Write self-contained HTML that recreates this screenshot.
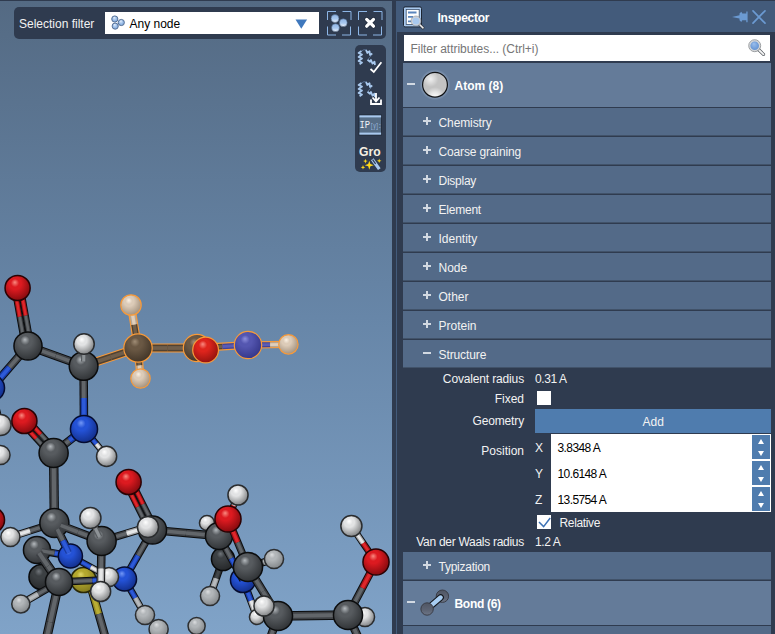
<!DOCTYPE html>
<html><head><meta charset="utf-8"><title>Inspector</title>
<style>
*{box-sizing:border-box;margin:0;padding:0}
html,body{width:775px;height:634px;overflow:hidden;background:#2f3b4f}
body{position:relative;font-family:"Liberation Sans",sans-serif;font-size:12px;color:#f2f2f2}
.abs{position:absolute}
#vp{left:0;top:1px;width:392px;height:633px;background:linear-gradient(#546a83 0%,#6786a8 50%,#80a3c8 100%);overflow:hidden}
#tb{left:14px;top:7px;width:372px;height:32px;background:#2f3b4f;border-radius:5px}
#stb{left:355px;top:45px;width:31px;height:127px;background:#2f3b4f;border-radius:5px}
.t{position:absolute;white-space:pre;line-height:14px;height:14px}
.b{font-weight:bold}
#hdr{left:396px;top:1px;width:379px;height:31px;background:#435b7b}
#hcol{left:396px;top:32px;width:1px;height:602px;background:#435b7b}
.row{position:absolute;left:403px;width:368px;background:#536a88;height:27px;box-shadow:0 1px 0 #415269}
.grow{position:absolute;left:403px;width:368px;background:#647b99;height:44px}
.pm{position:absolute;background:#d2d9e2}
.lbl{position:absolute;white-space:pre;line-height:14px;height:14px;text-align:right;right:251px}
.val{position:absolute;white-space:pre;line-height:14px;height:14px;left:535px}
.spin{position:absolute;left:752px;width:18px;height:24px;background:#4f7cae}
.spin:before{content:"";position:absolute;left:5.5px;top:3.5px;border:3.5px solid transparent;border-top:0;border-bottom:5.5px solid #fff}
.spin:after{content:"";position:absolute;left:5.5px;top:15.5px;border:3.5px solid transparent;border-bottom:0;border-top:5.5px solid #fff}
</style></head><body>
<div id="vp" class="abs">
<svg class="abs" style="left:0;top:-1px" width="392" height="634" viewBox="0 0 392 634" stroke-linecap="butt">
<defs><radialGradient id="gC" cx="0.42" cy="0.40" r="0.68" fx="0.39" fy="0.27"><stop offset="0" stop-color="#b4b9bd"/><stop offset="0.24" stop-color="#575b5f"/><stop offset="0.36" stop-color="#575b5f"/><stop offset="1" stop-color="#2a2d30"/></radialGradient><radialGradient id="gO" cx="0.42" cy="0.40" r="0.68" fx="0.39" fy="0.27"><stop offset="0" stop-color="#fa8a80"/><stop offset="0.24" stop-color="#dc1a20"/><stop offset="0.36" stop-color="#dc1a20"/><stop offset="1" stop-color="#78080c"/></radialGradient><radialGradient id="gN" cx="0.42" cy="0.40" r="0.68" fx="0.39" fy="0.27"><stop offset="0" stop-color="#7398f6"/><stop offset="0.24" stop-color="#2452d6"/><stop offset="0.36" stop-color="#2452d6"/><stop offset="1" stop-color="#102a80"/></radialGradient><radialGradient id="gH" cx="0.42" cy="0.40" r="0.68" fx="0.39" fy="0.27"><stop offset="0" stop-color="#ffffff"/><stop offset="0.24" stop-color="#e2e3e4"/><stop offset="0.36" stop-color="#e2e3e4"/><stop offset="1" stop-color="#727476"/></radialGradient><radialGradient id="gHg" cx="0.42" cy="0.40" r="0.68" fx="0.39" fy="0.27"><stop offset="0" stop-color="#dcdee0"/><stop offset="0.24" stop-color="#b2b6b9"/><stop offset="0.36" stop-color="#b2b6b9"/><stop offset="1" stop-color="#7c8083"/></radialGradient><radialGradient id="gS" cx="0.42" cy="0.40" r="0.68" fx="0.39" fy="0.27"><stop offset="0" stop-color="#e0d668"/><stop offset="0.24" stop-color="#b4a82e"/><stop offset="0.36" stop-color="#b4a82e"/><stop offset="1" stop-color="#7a721c"/></radialGradient><radialGradient id="gCs" cx="0.42" cy="0.40" r="0.68" fx="0.39" fy="0.27"><stop offset="0" stop-color="#a08d76"/><stop offset="0.24" stop-color="#6a5844"/><stop offset="0.36" stop-color="#6a5844"/><stop offset="1" stop-color="#3c3024"/></radialGradient><radialGradient id="gHs" cx="0.42" cy="0.40" r="0.68" fx="0.39" fy="0.27"><stop offset="0" stop-color="#fbf1e4"/><stop offset="0.24" stop-color="#dccbb8"/><stop offset="0.36" stop-color="#dccbb8"/><stop offset="1" stop-color="#9c8a76"/></radialGradient><radialGradient id="gNs" cx="0.42" cy="0.40" r="0.68" fx="0.39" fy="0.27"><stop offset="0" stop-color="#8e90de"/><stop offset="0.24" stop-color="#5456b0"/><stop offset="0.36" stop-color="#5456b0"/><stop offset="1" stop-color="#303284"/></radialGradient><radialGradient id="gOs" cx="0.42" cy="0.40" r="0.68" fx="0.39" fy="0.27"><stop offset="0" stop-color="#fa8a80"/><stop offset="0.24" stop-color="#de241c"/><stop offset="0.36" stop-color="#de241c"/><stop offset="1" stop-color="#88100c"/></radialGradient><radialGradient id="gCd" cx="0.42" cy="0.40" r="0.68" fx="0.39" fy="0.27"><stop offset="0" stop-color="#70757a"/><stop offset="0.24" stop-color="#3c4043"/><stop offset="0.36" stop-color="#3c4043"/><stop offset="1" stop-color="#222426"/></radialGradient></defs>
<line x1="89.0" y1="580.0" x2="109.0" y2="650.0" stroke="#0c0d0e" stroke-width="8.5"/><line x1="89.0" y1="580.0" x2="98.7" y2="614.0" stroke="#948a24" stroke-width="6.5"/><line x1="89.0" y1="580.0" x2="98.7" y2="614.0" stroke="#b9ad34" stroke-width="3.6"/><line x1="98.7" y1="614.0" x2="109.0" y2="650.0" stroke="#3e4145" stroke-width="6.5"/><line x1="98.7" y1="614.0" x2="109.0" y2="650.0" stroke="#62666a" stroke-width="3.6"/><line x1="223.0" y1="559.0" x2="210.0" y2="596.0" stroke="#0c0d0e" stroke-width="7.6"/><line x1="223.0" y1="559.0" x2="216.2" y2="578.4" stroke="#2d3033" stroke-width="5.6"/><line x1="223.0" y1="559.0" x2="216.2" y2="578.4" stroke="#424649" stroke-width="3.1"/><line x1="216.2" y1="578.4" x2="210.0" y2="596.0" stroke="#94989b" stroke-width="5.6"/><line x1="216.2" y1="578.4" x2="210.0" y2="596.0" stroke="#b7babd" stroke-width="3.1"/><line x1="219.0" y1="536.0" x2="223.0" y2="559.0" stroke="#0c0d0e" stroke-width="8.5"/><line x1="219.0" y1="536.0" x2="221.2" y2="548.5" stroke="#3e4145" stroke-width="6.5"/><line x1="219.0" y1="536.0" x2="221.2" y2="548.5" stroke="#62666a" stroke-width="3.6"/><line x1="221.2" y1="548.5" x2="223.0" y2="559.0" stroke="#2d3033" stroke-width="6.5"/><line x1="221.2" y1="548.5" x2="223.0" y2="559.0" stroke="#424649" stroke-width="3.6"/><circle cx="41.5" cy="577" r="12.55" fill="url(#gCd)" stroke="#08090a" stroke-width="1.5"/><circle cx="83.5" cy="580" r="12.55" fill="url(#gS)" stroke="#2a2806" stroke-width="1.5"/><circle cx="158.6" cy="629" r="9.55" fill="url(#gHg)" stroke="#2c2e30" stroke-width="1.5"/><circle cx="196.6" cy="626" r="8.55" fill="url(#gHg)" stroke="#2c2e30" stroke-width="1.5"/><circle cx="207" cy="523" r="7.55" fill="url(#gH)" stroke="#2a2c2e" stroke-width="1.5"/><circle cx="223" cy="559" r="11.55" fill="url(#gCd)" stroke="#08090a" stroke-width="1.5"/><circle cx="210" cy="596" r="9.55" fill="url(#gHg)" stroke="#2c2e30" stroke-width="1.5"/><line x1="59.0" y1="582.0" x2="44.0" y2="650.0" stroke="#0c0d0e" stroke-width="9.4"/><line x1="59.0" y1="582.0" x2="50.1" y2="622.3" stroke="#3e4145" stroke-width="7.4"/><line x1="59.0" y1="582.0" x2="50.1" y2="622.3" stroke="#62666a" stroke-width="4.1"/><line x1="50.1" y1="622.3" x2="44.0" y2="650.0" stroke="#3e4145" stroke-width="7.4"/><line x1="50.1" y1="622.3" x2="44.0" y2="650.0" stroke="#62666a" stroke-width="4.1"/><line x1="243.0" y1="580.0" x2="257.0" y2="617.0" stroke="#0c0d0e" stroke-width="7.6"/><line x1="243.0" y1="580.0" x2="250.9" y2="600.8" stroke="#193ca6" stroke-width="5.6"/><line x1="243.0" y1="580.0" x2="250.9" y2="600.8" stroke="#2d5ad9" stroke-width="3.1"/><line x1="250.9" y1="600.8" x2="257.0" y2="617.0" stroke="#a4a5a7" stroke-width="5.6"/><line x1="250.9" y1="600.8" x2="257.0" y2="617.0" stroke="#e5e6e7" stroke-width="3.1"/><line x1="138.0" y1="348.0" x2="197.0" y2="348.0" stroke="#f79a3a" stroke-width="9.2"/><line x1="138.0" y1="348.0" x2="167.8" y2="348.0" stroke="#504232" stroke-width="7.0"/><line x1="138.0" y1="348.0" x2="167.8" y2="348.0" stroke="#705e4a" stroke-width="3.8"/><line x1="167.8" y1="348.0" x2="197.0" y2="348.0" stroke="#504232" stroke-width="7.0"/><line x1="167.8" y1="348.0" x2="197.0" y2="348.0" stroke="#705e4a" stroke-width="3.8"/><line x1="197.0" y1="348.0" x2="248.0" y2="345.0" stroke="#f79a3a" stroke-width="7.8"/><line x1="197.0" y1="348.0" x2="222.5" y2="346.5" stroke="#504232" stroke-width="5.6"/><line x1="197.0" y1="348.0" x2="222.5" y2="346.5" stroke="#705e4a" stroke-width="3.1"/><line x1="222.5" y1="346.5" x2="248.0" y2="345.0" stroke="#404297" stroke-width="5.6"/><line x1="222.5" y1="346.5" x2="248.0" y2="345.0" stroke="#5a5cb5" stroke-width="3.1"/><line x1="59.0" y1="582.0" x2="20.8" y2="604.0" stroke="#0c0d0e" stroke-width="7.6"/><line x1="59.0" y1="582.0" x2="38.0" y2="594.1" stroke="#3e4145" stroke-width="5.6"/><line x1="59.0" y1="582.0" x2="38.0" y2="594.1" stroke="#62666a" stroke-width="3.1"/><line x1="38.0" y1="594.1" x2="20.8" y2="604.0" stroke="#94989b" stroke-width="5.6"/><line x1="38.0" y1="594.1" x2="20.8" y2="604.0" stroke="#b7babd" stroke-width="3.1"/><line x1="124.5" y1="579.0" x2="145.0" y2="615.0" stroke="#0c0d0e" stroke-width="7.1"/><line x1="124.5" y1="579.0" x2="135.4" y2="598.1" stroke="#193ca6" stroke-width="5.1"/><line x1="124.5" y1="579.0" x2="135.4" y2="598.1" stroke="#2d5ad9" stroke-width="2.8"/><line x1="135.4" y1="598.1" x2="145.0" y2="615.0" stroke="#94989b" stroke-width="5.1"/><line x1="135.4" y1="598.1" x2="145.0" y2="615.0" stroke="#b7babd" stroke-width="2.8"/><circle cx="197" cy="348" r="13.70" fill="url(#gCs)" stroke="#f79a3a" stroke-width="1.2"/><circle cx="20.8" cy="604" r="9.05" fill="url(#gHg)" stroke="#2c2e30" stroke-width="1.5"/><circle cx="145" cy="615" r="9.55" fill="url(#gHg)" stroke="#2c2e30" stroke-width="1.5"/><circle cx="243" cy="580" r="12.55" fill="url(#gN)" stroke="#050c30" stroke-width="1.5"/><circle cx="257" cy="617" r="7.55" fill="url(#gH)" stroke="#2a2c2e" stroke-width="1.5"/><circle cx="365" cy="617" r="9.55" fill="url(#gH)" stroke="#2a2c2e" stroke-width="1.5"/><line x1="219.0" y1="536.0" x2="243.0" y2="580.0" stroke="#0c0d0e" stroke-width="7.6"/><line x1="219.0" y1="536.0" x2="231.2" y2="558.4" stroke="#3e4145" stroke-width="5.6"/><line x1="219.0" y1="536.0" x2="231.2" y2="558.4" stroke="#62666a" stroke-width="3.1"/><line x1="231.2" y1="558.4" x2="243.0" y2="580.0" stroke="#193ca6" stroke-width="5.6"/><line x1="231.2" y1="558.4" x2="243.0" y2="580.0" stroke="#2d5ad9" stroke-width="3.1"/><line x1="20.6" y1="287.5" x2="31.0" y2="345.5" stroke="#0c0d0e" stroke-width="6.5"/><line x1="14.6" y1="288.5" x2="25.0" y2="346.5" stroke="#0c0d0e" stroke-width="6.5"/><line x1="20.6" y1="287.5" x2="25.7" y2="315.7" stroke="#a51015" stroke-width="4.5"/><line x1="20.6" y1="287.5" x2="25.7" y2="315.7" stroke="#df272b" stroke-width="2.5"/><line x1="25.7" y1="315.7" x2="31.0" y2="345.5" stroke="#3e4145" stroke-width="4.5"/><line x1="25.7" y1="315.7" x2="31.0" y2="345.5" stroke="#62666a" stroke-width="2.5"/><line x1="14.6" y1="288.5" x2="19.7" y2="316.8" stroke="#a51015" stroke-width="4.5"/><line x1="14.6" y1="288.5" x2="19.7" y2="316.8" stroke="#df272b" stroke-width="2.5"/><line x1="19.7" y1="316.8" x2="25.0" y2="346.5" stroke="#3e4145" stroke-width="4.5"/><line x1="19.7" y1="316.8" x2="25.0" y2="346.5" stroke="#62666a" stroke-width="2.5"/><line x1="28.0" y1="346.0" x2="83.6" y2="366.0" stroke="#0c0d0e" stroke-width="8.5"/><line x1="28.0" y1="346.0" x2="55.7" y2="355.9" stroke="#3e4145" stroke-width="6.5"/><line x1="28.0" y1="346.0" x2="55.7" y2="355.9" stroke="#62666a" stroke-width="3.6"/><line x1="55.7" y1="355.9" x2="83.6" y2="366.0" stroke="#3e4145" stroke-width="6.5"/><line x1="55.7" y1="355.9" x2="83.6" y2="366.0" stroke="#62666a" stroke-width="3.6"/><line x1="28.0" y1="346.0" x2="-8.5" y2="388.0" stroke="#0c0d0e" stroke-width="8.5"/><line x1="28.0" y1="346.0" x2="9.4" y2="367.4" stroke="#3e4145" stroke-width="6.5"/><line x1="28.0" y1="346.0" x2="9.4" y2="367.4" stroke="#62666a" stroke-width="3.6"/><line x1="9.4" y1="367.4" x2="-8.5" y2="388.0" stroke="#193ca6" stroke-width="6.5"/><line x1="9.4" y1="367.4" x2="-8.5" y2="388.0" stroke="#2d5ad9" stroke-width="3.6"/><line x1="-8.5" y1="388.0" x2="0.5" y2="425.0" stroke="#0c0d0e" stroke-width="6.7"/><line x1="-8.5" y1="388.0" x2="-3.7" y2="407.7" stroke="#193ca6" stroke-width="4.7"/><line x1="-8.5" y1="388.0" x2="-3.7" y2="407.7" stroke="#2d5ad9" stroke-width="2.6"/><line x1="-3.7" y1="407.7" x2="0.5" y2="425.0" stroke="#a4a5a7" stroke-width="4.7"/><line x1="-3.7" y1="407.7" x2="0.5" y2="425.0" stroke="#e5e6e7" stroke-width="2.6"/><line x1="83.6" y1="366.0" x2="138.0" y2="348.0" stroke="#f79a3a" stroke-width="9.2"/><line x1="83.6" y1="366.0" x2="110.9" y2="357.0" stroke="#504232" stroke-width="7.0"/><line x1="83.6" y1="366.0" x2="110.9" y2="357.0" stroke="#705e4a" stroke-width="3.8"/><line x1="110.9" y1="357.0" x2="138.0" y2="348.0" stroke="#504232" stroke-width="7.0"/><line x1="110.9" y1="357.0" x2="138.0" y2="348.0" stroke="#705e4a" stroke-width="3.8"/><line x1="138.0" y1="348.0" x2="131.0" y2="305.0" stroke="#f79a3a" stroke-width="8.2"/><line x1="138.0" y1="348.0" x2="134.2" y2="324.5" stroke="#504232" stroke-width="6.0"/><line x1="138.0" y1="348.0" x2="134.2" y2="324.5" stroke="#705e4a" stroke-width="3.3"/><line x1="134.2" y1="324.5" x2="131.0" y2="305.0" stroke="#b8a793" stroke-width="6.0"/><line x1="134.2" y1="324.5" x2="131.0" y2="305.0" stroke="#dfcfbd" stroke-width="3.3"/><line x1="138.0" y1="348.0" x2="140.5" y2="378.5" stroke="#f79a3a" stroke-width="8.2"/><line x1="138.0" y1="348.0" x2="139.4" y2="365.5" stroke="#504232" stroke-width="6.0"/><line x1="138.0" y1="348.0" x2="139.4" y2="365.5" stroke="#705e4a" stroke-width="3.3"/><line x1="139.4" y1="365.5" x2="140.5" y2="378.5" stroke="#b8a793" stroke-width="6.0"/><line x1="139.4" y1="365.5" x2="140.5" y2="378.5" stroke="#dfcfbd" stroke-width="3.3"/><line x1="248.0" y1="345.0" x2="288.4" y2="344.4" stroke="#f79a3a" stroke-width="7.3"/><line x1="248.0" y1="345.0" x2="270.2" y2="344.7" stroke="#404297" stroke-width="5.1"/><line x1="248.0" y1="345.0" x2="270.2" y2="344.7" stroke="#5a5cb5" stroke-width="2.8"/><line x1="270.2" y1="344.7" x2="288.4" y2="344.4" stroke="#b8a793" stroke-width="5.1"/><line x1="270.2" y1="344.7" x2="288.4" y2="344.4" stroke="#dfcfbd" stroke-width="2.8"/><line x1="83.6" y1="366.0" x2="84.0" y2="429.0" stroke="#0c0d0e" stroke-width="8.5"/><line x1="83.6" y1="366.0" x2="83.8" y2="397.9" stroke="#3e4145" stroke-width="6.5"/><line x1="83.6" y1="366.0" x2="83.8" y2="397.9" stroke="#62666a" stroke-width="3.6"/><line x1="83.8" y1="397.9" x2="84.0" y2="429.0" stroke="#193ca6" stroke-width="6.5"/><line x1="83.8" y1="397.9" x2="84.0" y2="429.0" stroke="#2d5ad9" stroke-width="3.6"/><line x1="84.0" y1="429.0" x2="53.6" y2="453.0" stroke="#0c0d0e" stroke-width="8.5"/><line x1="84.0" y1="429.0" x2="69.2" y2="440.7" stroke="#193ca6" stroke-width="6.5"/><line x1="84.0" y1="429.0" x2="69.2" y2="440.7" stroke="#2d5ad9" stroke-width="3.6"/><line x1="69.2" y1="440.7" x2="53.6" y2="453.0" stroke="#3e4145" stroke-width="6.5"/><line x1="69.2" y1="440.7" x2="53.6" y2="453.0" stroke="#62666a" stroke-width="3.6"/><line x1="84.0" y1="429.0" x2="106.6" y2="456.4" stroke="#0c0d0e" stroke-width="6.7"/><line x1="84.0" y1="429.0" x2="96.4" y2="444.1" stroke="#193ca6" stroke-width="4.7"/><line x1="84.0" y1="429.0" x2="96.4" y2="444.1" stroke="#2d5ad9" stroke-width="2.6"/><line x1="96.4" y1="444.1" x2="106.6" y2="456.4" stroke="#a4a5a7" stroke-width="4.7"/><line x1="96.4" y1="444.1" x2="106.6" y2="456.4" stroke="#e5e6e7" stroke-width="2.6"/><line x1="51.3" y1="455.1" x2="22.1" y2="423.1" stroke="#0c0d0e" stroke-width="6.5"/><line x1="55.9" y1="450.9" x2="26.7" y2="418.9" stroke="#0c0d0e" stroke-width="6.5"/><line x1="51.3" y1="455.1" x2="36.1" y2="438.3" stroke="#3e4145" stroke-width="4.5"/><line x1="51.3" y1="455.1" x2="36.1" y2="438.3" stroke="#62666a" stroke-width="2.5"/><line x1="36.1" y1="438.3" x2="22.1" y2="423.1" stroke="#a51015" stroke-width="4.5"/><line x1="36.1" y1="438.3" x2="22.1" y2="423.1" stroke="#df272b" stroke-width="2.5"/><line x1="55.9" y1="450.9" x2="40.6" y2="434.2" stroke="#3e4145" stroke-width="4.5"/><line x1="55.9" y1="450.9" x2="40.6" y2="434.2" stroke="#62666a" stroke-width="2.5"/><line x1="40.6" y1="434.2" x2="26.7" y2="418.9" stroke="#a51015" stroke-width="4.5"/><line x1="40.6" y1="434.2" x2="26.7" y2="418.9" stroke="#df272b" stroke-width="2.5"/><line x1="53.6" y1="453.0" x2="54.4" y2="523.0" stroke="#0c0d0e" stroke-width="9.4"/><line x1="53.6" y1="453.0" x2="54.0" y2="488.0" stroke="#3e4145" stroke-width="7.4"/><line x1="53.6" y1="453.0" x2="54.0" y2="488.0" stroke="#62666a" stroke-width="4.1"/><line x1="54.0" y1="488.0" x2="54.4" y2="523.0" stroke="#3e4145" stroke-width="7.4"/><line x1="54.0" y1="488.0" x2="54.4" y2="523.0" stroke="#62666a" stroke-width="4.1"/><line x1="152.5" y1="530.0" x2="219.0" y2="536.0" stroke="#0c0d0e" stroke-width="8.5"/><line x1="152.5" y1="530.0" x2="186.0" y2="533.0" stroke="#3e4145" stroke-width="6.5"/><line x1="152.5" y1="530.0" x2="186.0" y2="533.0" stroke="#62666a" stroke-width="3.6"/><line x1="186.0" y1="533.0" x2="219.0" y2="536.0" stroke="#3e4145" stroke-width="6.5"/><line x1="186.0" y1="533.0" x2="219.0" y2="536.0" stroke="#62666a" stroke-width="3.6"/><line x1="228.0" y1="519.0" x2="238.0" y2="495.0" stroke="#0c0d0e" stroke-width="6.7"/><line x1="228.0" y1="519.0" x2="233.6" y2="505.6" stroke="#a51015" stroke-width="4.7"/><line x1="228.0" y1="519.0" x2="233.6" y2="505.6" stroke="#df272b" stroke-width="2.6"/><line x1="233.6" y1="505.6" x2="238.0" y2="495.0" stroke="#a4a5a7" stroke-width="4.7"/><line x1="233.6" y1="505.6" x2="238.0" y2="495.0" stroke="#e5e6e7" stroke-width="2.6"/><line x1="248.0" y1="567.0" x2="274.0" y2="559.0" stroke="#0c0d0e" stroke-width="7.6"/><line x1="248.0" y1="567.0" x2="263.4" y2="562.3" stroke="#3e4145" stroke-width="5.6"/><line x1="248.0" y1="567.0" x2="263.4" y2="562.3" stroke="#62666a" stroke-width="3.1"/><line x1="263.4" y1="562.3" x2="274.0" y2="559.0" stroke="#94989b" stroke-width="5.6"/><line x1="263.4" y1="562.3" x2="274.0" y2="559.0" stroke="#b7babd" stroke-width="3.1"/><circle cx="17.6" cy="288" r="12.55" fill="url(#gO)" stroke="#2a0203" stroke-width="1.5"/><circle cx="28" cy="346" r="14.05" fill="url(#gC)" stroke="#0c0d0e" stroke-width="1.5"/><circle cx="83.6" cy="366" r="14.35" fill="url(#gC)" stroke="#0c0d0e" stroke-width="1.5"/><circle cx="138" cy="348" r="14.20" fill="url(#gCs)" stroke="#f79a3a" stroke-width="1.2"/><circle cx="131" cy="305" r="10.20" fill="url(#gHs)" stroke="#f79a3a" stroke-width="1.2"/><circle cx="248" cy="345" r="13.70" fill="url(#gNs)" stroke="#f79a3a" stroke-width="1.2"/><circle cx="288.4" cy="344.4" r="9.70" fill="url(#gHs)" stroke="#f79a3a" stroke-width="1.2"/><circle cx="-8.5" cy="388" r="13.05" fill="url(#gN)" stroke="#050c30" stroke-width="1.5"/><circle cx="84" cy="429" r="13.55" fill="url(#gN)" stroke="#050c30" stroke-width="1.5"/><circle cx="53.6" cy="453" r="14.55" fill="url(#gC)" stroke="#0c0d0e" stroke-width="1.5"/><circle cx="-8" cy="520" r="12.55" fill="url(#gO)" stroke="#2a0203" stroke-width="1.5"/><circle cx="37" cy="550" r="13.55" fill="url(#gC)" stroke="#0c0d0e" stroke-width="1.5"/><circle cx="238" cy="495" r="10.05" fill="url(#gH)" stroke="#2a2c2e" stroke-width="1.5"/><circle cx="219" cy="536" r="13.55" fill="url(#gC)" stroke="#0c0d0e" stroke-width="1.5"/><circle cx="274" cy="559" r="9.55" fill="url(#gHg)" stroke="#2c2e30" stroke-width="1.5"/><line x1="70.4" y1="556.0" x2="50.3" y2="552.4" stroke="#0c0d0e" stroke-width="7.6"/><line x1="70.4" y1="556.0" x2="54.4" y2="553.1" stroke="#193ca6" stroke-width="5.6"/><line x1="70.4" y1="556.0" x2="54.4" y2="553.1" stroke="#2d5ad9" stroke-width="3.1"/><line x1="54.4" y1="553.1" x2="41.8" y2="550.9" stroke="#3e4145" stroke-width="5.6"/><line x1="54.4" y1="553.1" x2="41.8" y2="550.9" stroke="#62666a" stroke-width="3.1"/><line x1="70.4" y1="556.0" x2="109.0" y2="577.0" stroke="#0c0d0e" stroke-width="6.7"/><line x1="70.4" y1="556.0" x2="90.8" y2="567.1" stroke="#193ca6" stroke-width="4.7"/><line x1="70.4" y1="556.0" x2="90.8" y2="567.1" stroke="#2d5ad9" stroke-width="2.6"/><line x1="90.8" y1="567.1" x2="109.0" y2="577.0" stroke="#a4a5a7" stroke-width="4.7"/><line x1="90.8" y1="567.1" x2="109.0" y2="577.0" stroke="#e5e6e7" stroke-width="2.6"/><circle cx="70.4" cy="556" r="12.05" fill="url(#gN)" stroke="#050c30" stroke-width="1.5"/><line x1="348.0" y1="615.0" x2="364.0" y2="650.0" stroke="#0c0d0e" stroke-width="8.5"/><line x1="348.0" y1="615.0" x2="358.9" y2="638.9" stroke="#3e4145" stroke-width="6.5"/><line x1="348.0" y1="615.0" x2="358.9" y2="638.9" stroke="#62666a" stroke-width="3.6"/><line x1="358.9" y1="638.9" x2="364.0" y2="650.0" stroke="#3e4145" stroke-width="6.5"/><line x1="358.9" y1="638.9" x2="364.0" y2="650.0" stroke="#62666a" stroke-width="3.6"/><line x1="278.0" y1="616.0" x2="266.0" y2="650.0" stroke="#0c0d0e" stroke-width="8.5"/><line x1="278.0" y1="616.0" x2="269.7" y2="639.6" stroke="#3e4145" stroke-width="6.5"/><line x1="278.0" y1="616.0" x2="269.7" y2="639.6" stroke="#62666a" stroke-width="3.6"/><line x1="269.7" y1="639.6" x2="266.0" y2="650.0" stroke="#3e4145" stroke-width="6.5"/><line x1="269.7" y1="639.6" x2="266.0" y2="650.0" stroke="#62666a" stroke-width="3.6"/><line x1="44.6" y1="561.1" x2="59.0" y2="582.0" stroke="#0c0d0e" stroke-width="9.4"/><line x1="39.0" y1="552.9" x2="48.0" y2="566.0" stroke="#3e4145" stroke-width="7.4"/><line x1="39.0" y1="552.9" x2="48.0" y2="566.0" stroke="#62666a" stroke-width="4.1"/><line x1="48.0" y1="566.0" x2="59.0" y2="582.0" stroke="#3e4145" stroke-width="7.4"/><line x1="48.0" y1="566.0" x2="59.0" y2="582.0" stroke="#62666a" stroke-width="4.1"/><line x1="59.0" y1="582.0" x2="124.5" y2="579.0" stroke="#0c0d0e" stroke-width="7.6"/><line x1="59.0" y1="582.0" x2="92.5" y2="580.5" stroke="#3e4145" stroke-width="5.6"/><line x1="59.0" y1="582.0" x2="92.5" y2="580.5" stroke="#62666a" stroke-width="3.1"/><line x1="92.5" y1="580.5" x2="124.5" y2="579.0" stroke="#193ca6" stroke-width="5.6"/><line x1="92.5" y1="580.5" x2="124.5" y2="579.0" stroke="#2d5ad9" stroke-width="3.1"/><line x1="124.5" y1="579.0" x2="152.5" y2="530.0" stroke="#0c0d0e" stroke-width="7.6"/><line x1="124.5" y1="579.0" x2="138.0" y2="555.4" stroke="#193ca6" stroke-width="5.6"/><line x1="124.5" y1="579.0" x2="138.0" y2="555.4" stroke="#2d5ad9" stroke-width="3.1"/><line x1="138.0" y1="555.4" x2="152.5" y2="530.0" stroke="#3e4145" stroke-width="5.6"/><line x1="138.0" y1="555.4" x2="152.5" y2="530.0" stroke="#62666a" stroke-width="3.1"/><circle cx="124.5" cy="579" r="12.05" fill="url(#gN)" stroke="#050c30" stroke-width="1.5"/><line x1="54.4" y1="523.0" x2="10.4" y2="537.0" stroke="#0c0d0e" stroke-width="7.6"/><line x1="54.4" y1="523.0" x2="30.0" y2="530.8" stroke="#3e4145" stroke-width="5.6"/><line x1="54.4" y1="523.0" x2="30.0" y2="530.8" stroke="#62666a" stroke-width="3.1"/><line x1="30.0" y1="530.8" x2="10.4" y2="537.0" stroke="#a4a5a7" stroke-width="5.6"/><line x1="30.0" y1="530.8" x2="10.4" y2="537.0" stroke="#e5e6e7" stroke-width="3.1"/><line x1="149.8" y1="531.4" x2="125.9" y2="483.4" stroke="#0c0d0e" stroke-width="6.5"/><line x1="155.2" y1="528.6" x2="131.3" y2="480.6" stroke="#0c0d0e" stroke-width="6.5"/><line x1="149.8" y1="531.4" x2="137.5" y2="506.7" stroke="#3e4145" stroke-width="4.5"/><line x1="149.8" y1="531.4" x2="137.5" y2="506.7" stroke="#62666a" stroke-width="2.5"/><line x1="137.5" y1="506.7" x2="125.9" y2="483.4" stroke="#a51015" stroke-width="4.5"/><line x1="137.5" y1="506.7" x2="125.9" y2="483.4" stroke="#df272b" stroke-width="2.5"/><line x1="155.2" y1="528.6" x2="142.9" y2="504.0" stroke="#3e4145" stroke-width="4.5"/><line x1="155.2" y1="528.6" x2="142.9" y2="504.0" stroke="#62666a" stroke-width="2.5"/><line x1="142.9" y1="504.0" x2="131.3" y2="480.6" stroke="#a51015" stroke-width="4.5"/><line x1="142.9" y1="504.0" x2="131.3" y2="480.6" stroke="#df272b" stroke-width="2.5"/><line x1="248.0" y1="567.0" x2="278.0" y2="616.0" stroke="#0c0d0e" stroke-width="8.5"/><line x1="248.0" y1="567.0" x2="263.0" y2="591.5" stroke="#3e4145" stroke-width="6.5"/><line x1="248.0" y1="567.0" x2="263.0" y2="591.5" stroke="#62666a" stroke-width="3.6"/><line x1="263.0" y1="591.5" x2="278.0" y2="616.0" stroke="#3e4145" stroke-width="6.5"/><line x1="263.0" y1="591.5" x2="278.0" y2="616.0" stroke="#62666a" stroke-width="3.6"/><line x1="278.0" y1="616.0" x2="348.0" y2="615.0" stroke="#0c0d0e" stroke-width="9.4"/><line x1="278.0" y1="616.0" x2="313.0" y2="615.5" stroke="#3e4145" stroke-width="7.4"/><line x1="278.0" y1="616.0" x2="313.0" y2="615.5" stroke="#62666a" stroke-width="4.1"/><line x1="313.0" y1="615.5" x2="348.0" y2="615.0" stroke="#3e4145" stroke-width="7.4"/><line x1="313.0" y1="615.5" x2="348.0" y2="615.0" stroke="#62666a" stroke-width="4.1"/><line x1="348.0" y1="615.0" x2="376.0" y2="562.0" stroke="#0c0d0e" stroke-width="8.0"/><line x1="348.0" y1="615.0" x2="362.4" y2="587.8" stroke="#3e4145" stroke-width="6.0"/><line x1="348.0" y1="615.0" x2="362.4" y2="587.8" stroke="#62666a" stroke-width="3.3"/><line x1="362.4" y1="587.8" x2="376.0" y2="562.0" stroke="#a51015" stroke-width="6.0"/><line x1="362.4" y1="587.8" x2="376.0" y2="562.0" stroke="#df272b" stroke-width="3.3"/><line x1="376.0" y1="562.0" x2="351.4" y2="526.0" stroke="#0c0d0e" stroke-width="7.1"/><line x1="376.0" y1="562.0" x2="363.0" y2="543.0" stroke="#a51015" stroke-width="5.1"/><line x1="376.0" y1="562.0" x2="363.0" y2="543.0" stroke="#df272b" stroke-width="2.8"/><line x1="363.0" y1="543.0" x2="351.4" y2="526.0" stroke="#a4a5a7" stroke-width="5.1"/><line x1="363.0" y1="543.0" x2="351.4" y2="526.0" stroke="#e5e6e7" stroke-width="2.8"/><circle cx="0.5" cy="425" r="10.55" fill="url(#gH)" stroke="#2a2c2e" stroke-width="1.5"/><circle cx="0.5" cy="455" r="9.55" fill="url(#gH)" stroke="#2a2c2e" stroke-width="1.5"/><circle cx="24.4" cy="421" r="12.55" fill="url(#gO)" stroke="#2a0203" stroke-width="1.5"/><circle cx="106.6" cy="456.4" r="10.05" fill="url(#gH)" stroke="#2a2c2e" stroke-width="1.5"/><circle cx="54.4" cy="523" r="14.55" fill="url(#gC)" stroke="#0c0d0e" stroke-width="1.5"/><circle cx="152.5" cy="530" r="14.05" fill="url(#gC)" stroke="#0c0d0e" stroke-width="1.5"/><circle cx="128.6" cy="482" r="12.55" fill="url(#gO)" stroke="#2a0203" stroke-width="1.5"/><circle cx="59" cy="582" r="13.55" fill="url(#gC)" stroke="#0c0d0e" stroke-width="1.5"/><circle cx="109" cy="577" r="9.55" fill="url(#gH)" stroke="#2a2c2e" stroke-width="1.5"/><circle cx="278" cy="616" r="14.55" fill="url(#gC)" stroke="#0c0d0e" stroke-width="1.5"/><circle cx="348" cy="615" r="14.55" fill="url(#gC)" stroke="#0c0d0e" stroke-width="1.5"/><circle cx="376" cy="562" r="13.05" fill="url(#gO)" stroke="#2a0203" stroke-width="1.5"/><circle cx="351.4" cy="526" r="10.55" fill="url(#gH)" stroke="#2a2c2e" stroke-width="1.5"/><line x1="83.7" y1="361.6" x2="83.8" y2="353.0" stroke="#575b5f" stroke-width="5.6"/><line x1="83.7" y1="361.6" x2="83.8" y2="353.0" stroke="#8e9397" stroke-width="3.1"/><line x1="83.8" y1="353.0" x2="84.0" y2="344.0" stroke="#e2e3e4" stroke-width="5.6"/><line x1="83.8" y1="353.0" x2="84.0" y2="344.0" stroke="#f3f3f4" stroke-width="3.1"/><line x1="60.7" y1="536.0" x2="65.2" y2="545.2" stroke="#0c0d0e" stroke-width="8.5"/><line x1="57.3" y1="529.1" x2="62.9" y2="540.6" stroke="#3e4145" stroke-width="6.5"/><line x1="57.3" y1="529.1" x2="62.9" y2="540.6" stroke="#62666a" stroke-width="3.6"/><line x1="62.9" y1="540.6" x2="68.8" y2="552.6" stroke="#193ca6" stroke-width="6.5"/><line x1="62.9" y1="540.6" x2="68.8" y2="552.6" stroke="#2d5ad9" stroke-width="3.6"/><line x1="67.9" y1="528.2" x2="101.6" y2="541.0" stroke="#0c0d0e" stroke-width="8.5"/><line x1="60.7" y1="525.4" x2="78.0" y2="532.0" stroke="#3e4145" stroke-width="6.5"/><line x1="60.7" y1="525.4" x2="78.0" y2="532.0" stroke="#62666a" stroke-width="3.6"/><line x1="78.0" y1="532.0" x2="101.6" y2="541.0" stroke="#3e4145" stroke-width="6.5"/><line x1="78.0" y1="532.0" x2="101.6" y2="541.0" stroke="#62666a" stroke-width="3.6"/><line x1="228.0" y1="519.0" x2="248.0" y2="567.0" stroke="#0c0d0e" stroke-width="7.6"/><line x1="228.0" y1="519.0" x2="237.7" y2="542.3" stroke="#a51015" stroke-width="5.6"/><line x1="228.0" y1="519.0" x2="237.7" y2="542.3" stroke="#df272b" stroke-width="3.1"/><line x1="237.7" y1="542.3" x2="248.0" y2="567.0" stroke="#3e4145" stroke-width="5.6"/><line x1="237.7" y1="542.3" x2="248.0" y2="567.0" stroke="#62666a" stroke-width="3.1"/><line x1="101.6" y1="541.0" x2="148.0" y2="527.0" stroke="#0c0d0e" stroke-width="8.0"/><line x1="101.6" y1="541.0" x2="126.7" y2="533.4" stroke="#3e4145" stroke-width="6.0"/><line x1="101.6" y1="541.0" x2="126.7" y2="533.4" stroke="#62666a" stroke-width="3.3"/><line x1="126.7" y1="533.4" x2="148.0" y2="527.0" stroke="#a4a5a7" stroke-width="6.0"/><line x1="126.7" y1="533.4" x2="148.0" y2="527.0" stroke="#e5e6e7" stroke-width="3.3"/><line x1="101.6" y1="541.0" x2="100.6" y2="591.5" stroke="#0c0d0e" stroke-width="8.5"/><line x1="101.6" y1="541.0" x2="101.1" y2="568.5" stroke="#3e4145" stroke-width="6.5"/><line x1="101.6" y1="541.0" x2="101.1" y2="568.5" stroke="#62666a" stroke-width="3.6"/><line x1="101.1" y1="568.5" x2="100.6" y2="591.5" stroke="#a4a5a7" stroke-width="6.5"/><line x1="101.1" y1="568.5" x2="100.6" y2="591.5" stroke="#e5e6e7" stroke-width="3.6"/><circle cx="140.5" cy="378.5" r="9.70" fill="url(#gHs)" stroke="#f79a3a" stroke-width="1.2"/><circle cx="205.6" cy="350" r="12.90" fill="url(#gOs)" stroke="#f79a3a" stroke-width="1.2"/><circle cx="101.6" cy="541" r="14.55" fill="url(#gC)" stroke="#0c0d0e" stroke-width="1.5"/><circle cx="10.4" cy="537" r="9.55" fill="url(#gH)" stroke="#2a2c2e" stroke-width="1.5"/><circle cx="228" cy="519" r="13.05" fill="url(#gO)" stroke="#2a0203" stroke-width="1.5"/><circle cx="248" cy="567" r="14.55" fill="url(#gC)" stroke="#0c0d0e" stroke-width="1.5"/><line x1="99.6" y1="537.0" x2="95.1" y2="527.7" stroke="#575b5f" stroke-width="5.6"/><line x1="99.6" y1="537.0" x2="95.1" y2="527.7" stroke="#8e9397" stroke-width="3.1"/><line x1="95.1" y1="527.7" x2="90.4" y2="518.0" stroke="#e2e3e4" stroke-width="5.6"/><line x1="95.1" y1="527.7" x2="90.4" y2="518.0" stroke="#f3f3f4" stroke-width="3.1"/><circle cx="84" cy="344" r="10.25" fill="url(#gH)" stroke="#2a2c2e" stroke-width="1.5"/><circle cx="90.4" cy="518" r="10.55" fill="url(#gH)" stroke="#2a2c2e" stroke-width="1.5"/><circle cx="148" cy="527" r="10.55" fill="url(#gH)" stroke="#2a2c2e" stroke-width="1.5"/><circle cx="100.6" cy="591.5" r="10.05" fill="url(#gH)" stroke="#2a2c2e" stroke-width="1.5"/><circle cx="264" cy="606" r="10.05" fill="url(#gH)" stroke="#2a2c2e" stroke-width="1.5"/>
</svg>
</div>
<div id="tb" class="abs"></div>
<div class="t" style="left:19px;top:17.1px">Selection filter</div>
<div class="abs" style="left:105px;top:12px;width:214px;height:22px;background:#fff"></div>
<div class="t" style="left:129.5px;top:17.1px;color:#000">Any node</div>
<svg class="abs" style="left:105px;top:12px" width="214" height="22" viewBox="105 12 214 22">
<defs><radialGradient id="sb2" cx="0.5" cy="0.5" r="0.55" fx="0.4" fy="0.25"><stop offset="0" stop-color="#e6f0fc"/><stop offset="0.55" stop-color="#9dbfe9"/><stop offset="1" stop-color="#7ba2d6"/></radialGradient><linearGradient id="sb" x1="0" y1="0" x2="0" y2="1"><stop offset="0" stop-color="#8fb4e4"/><stop offset="0.55" stop-color="#a9c8ee"/><stop offset="1" stop-color="#f2f7ff"/></linearGradient></defs>
<g stroke="#4f6a8e" stroke-width="0.9" fill="url(#sb2)"><circle cx="114.8" cy="19" r="3.1"/><circle cx="121.3" cy="22.5" r="3.1"/><circle cx="115.2" cy="26.100" r="3.1"/></g>
<path d="M295.5 19.5h11.6l-5.8 9.3z" fill="#3f78bd"/>
</svg>
<svg class="abs" style="left:322px;top:7px" width="64" height="32" viewBox="322 7 64 32">
<g fill="none" stroke="#8db6e6" stroke-width="1">
<path d="M327.5 20v-8.5h8.5M342.5 11.500h8.500v8.500M350.500 26.500v8.500h-8.500M336 35h-8.500v-8.500"/>
<path d="M358.500 20v-8.500h8.500M373.500 11.500h8.500v8.500M381.500 26.500v8.500h-8.500M367 35h-8.500v-8.500"/>
</g>
<g fill="url(#sb)" stroke="#4a6282" stroke-width="0.5"><circle cx="335" cy="18.500" r="3.900"/><circle cx="343.300" cy="22.700" r="3.900"/><circle cx="335.500" cy="27.700" r="3.900"/></g>
<path d="M366.700 19.400l6.800 6.800M373.500 19.400l-6.800 6.800" stroke="#1c2430" stroke-width="4.600" stroke-linecap="round" opacity="0.6"/>
<path d="M366.700 19.400l6.800 6.800M373.500 19.400l-6.800 6.800" stroke="#fff" stroke-width="3.200" stroke-linecap="round"/>
</svg>
<div id="stb" class="abs"></div>
<svg class="abs" style="left:355px;top:45px" width="31" height="127" viewBox="355 45 31 127">
<g id="sq" fill="none" stroke="#a9c9ee" stroke-width="1.800" stroke-linejoin="round">
<path d="M361.500 51L358.600 53L362 54.600L358.600 57L362 58.600L358.600 61L362 62.600L359.600 64.200"/>
<path d="M366 49.800L367.300 53L369.500 51.200L370 55L372.300 53.600"/>
<path d="M367.500 59.800L370 61.800L371 60L372.500 63.600L374.500 61.600L375 65"/>
<path d="M361.500 51q2.500-2 4.500-1.200M371.500 55.500q-2.500 2-3.500 4" stroke="#6f8fb8" stroke-width="0.600"/>
</g>
<use href="#sq" y="32"/>
<path d="M370.500 69l3.300 3 7.600-9.700" fill="none" stroke="#fff" stroke-width="1.800"/>
<path d="M371 99.500v4.500h10v-4.500" fill="none" stroke="#fff" stroke-width="1.800"/>
<path d="M376 93v8M372.500 97.500l3.500 3.800 3.500-3.800" fill="none" stroke="#fff" stroke-width="1.800"/>
<rect x="359" y="115" width="22.500" height="20" fill="#566d86" stroke="#1d2633" stroke-width="0.800"/>
<rect x="359.400" y="115.400" width="21.700" height="2" fill="#a9c9ee"/><rect x="359.400" y="132.600" width="21.700" height="2" fill="#a9c9ee"/>
<text x="359.400" y="128.400" font-family="Liberation Mono, monospace" font-size="10.500" fill="#eef2f7" textLength="10.500" lengthAdjust="spacingAndGlyphs">IP</text>
<text x="370.600" y="128" font-family="Liberation Mono, monospace" font-size="7" fill="#a9c9ee" textLength="10.500" lengthAdjust="spacingAndGlyphs">[y]:</text>
<text x="359" y="156" font-family="Liberation Sans, sans-serif" font-weight="bold" font-size="12" fill="#f6f0e2" textLength="21.600" lengthAdjust="spacingAndGlyphs">Gro</text>
<g fill="#ffd91a">
<path d="M369.300 160.700l1.100 3.400 3.400 1.100-3.400 1.100-1.100 3.400-1.100-3.400-3.400-1.100 3.400-1.100z"/>
<path d="M365.400 158.800l0.600 1.700 1.700 0.600-1.700 0.600-0.600 1.700-0.600-1.700-1.700-0.600 1.700-0.600z"/>
<path d="M363 165l0.600 1.700 1.700 0.600-1.700 0.600-0.600 1.700-0.600-1.700-1.700-0.600 1.700-0.600z"/>
<path d="M379.200 158.500l0.600 1.700 1.700 0.600-1.700 0.600-0.600 1.700-0.600-1.700-1.700-0.600 1.700-0.600z"/>
</g>
<path d="M372.300 159.300l7 9.800" stroke="#a9c9ee" stroke-width="3.200"/>
<path d="M372.600 159.700l3 4.200" stroke="#2f3b4f" stroke-width="1.200"/>
</svg>

<!-- divider -->
<div class="abs" style="left:392px;top:0;width:4px;height:634px;background:#2f3b4f"></div>
<div class="abs" style="left:0;top:0;width:775px;height:1px;background:#2f3b4f"></div>
<div id="hdr" class="abs"></div><div id="hcol" class="abs"></div>
<div class="t b" style="left:437.500px;top:10.500px;color:#fff;letter-spacing:-0.25px">Inspector</div>
<svg class="abs" style="left:400px;top:4px" width="28" height="28" viewBox="400 4 28 28">
<rect x="403.500" y="6.900" width="18" height="20" rx="1.500" fill="#a9c9ee" stroke="#1d2633" stroke-width="1"/>
<rect x="406.200" y="9.400" width="13" height="15" fill="#fff" stroke="#3a4f6c" stroke-width="0.800"/>
<path d="M408 12.500h8.500M408 16.900h5M408 21.300h3" stroke="#5b86bd" stroke-width="1.800"/>
<path d="M419 24l4 3.800" stroke="#30363f" stroke-width="3" stroke-linecap="round"/>
<path d="M419 24l4 3.800" stroke="#f0f0f0" stroke-width="1.600" stroke-linecap="round"/>
<circle cx="416" cy="21" r="4.200" fill="#a9c9ee" stroke="#cfd3d8" stroke-width="1.300"/>
<circle cx="416" cy="21" r="5" fill="none" stroke="#70757c" stroke-width="0.500"/>
</svg>
<svg class="abs" style="left:728px;top:6px" width="42" height="22" viewBox="728 6 42 22">
<path d="M732 17l7.500-1.700v-1.800l1.800-1.800 1 1.800h4v-2h1.300v10.700h-1.300v-2h-4l-1 1.800-1.800-1.800v-1.800z" fill="#6b9ad2"/>
<path d="M753 10.800l12 12.400M765 10.800l-12 12.400" stroke="#6b9ad2" stroke-width="1.700" stroke-linecap="round"/>
</svg>
<!-- filter -->
<div class="abs" style="left:404px;top:35px;width:366px;height:26px;background:#fff"></div>
<div class="t" style="left:410.500px;top:42.1px;color:#767676;letter-spacing:-0.04px">Filter attributes... (Ctrl+i)</div>
<svg class="abs" style="left:744px;top:36px" width="26" height="24" viewBox="744 36 26 24">
<defs><radialGradient id="mg" cx="0.5" cy="0.5" r="0.5" fx="0.4" fy="0.3"><stop offset="0" stop-color="#9cc0ee"/><stop offset="1" stop-color="#5f8fd0"/></radialGradient></defs>
<path d="M758.500 49.500l5 4.800" stroke="#555a60" stroke-width="3.200" stroke-linecap="round"/>
<path d="M758.500 49.500l5 4.800" stroke="#f4f4f4" stroke-width="1.800" stroke-linecap="round"/>
<circle cx="754.700" cy="45.700" r="5" fill="url(#mg)" stroke="#d4d6d8" stroke-width="1.400"/>
<circle cx="754.700" cy="45.700" r="6" fill="none" stroke="#777b80" stroke-width="0.700"/>
</svg>

<!-- rows -->
<div class="grow" style="top:63px"></div>
<div class="pm" style="left:407px;top:83px;width:8px;height:2px"></div>
<svg class="abs" style="left:418px;top:67px" width="34" height="34" viewBox="418 67 34 34">
<defs><radialGradient id="ag1" cx="0.32" cy="0.27" r="0.32"><stop offset="0" stop-color="#fff" stop-opacity="0.75"/><stop offset="1" stop-color="#fff" stop-opacity="0"/></radialGradient>
<radialGradient id="ag2" cx="0.5" cy="1.02" r="0.42"><stop offset="0" stop-color="#fff" stop-opacity="1"/><stop offset="0.5" stop-color="#fff" stop-opacity="0.6"/><stop offset="1" stop-color="#fff" stop-opacity="0"/></radialGradient>
<radialGradient id="ag3" cx="0.5" cy="0.5" r="0.5"><stop offset="0.8" stop-color="#c8d8ee" stop-opacity="0.35"/><stop offset="1" stop-color="#c8d8ee" stop-opacity="0"/></radialGradient></defs>
<circle cx="435" cy="84.700" r="15.500" fill="url(#ag3)"/>
<circle cx="435" cy="84.700" r="12.300" fill="#c3c3c3"/>
<circle cx="435" cy="84.700" r="12.300" fill="url(#ag1)"/>
<circle cx="435" cy="84.700" r="12.300" fill="url(#ag2)"/>
<circle cx="435" cy="84.700" r="12.400" fill="none" stroke="#101215" stroke-width="1.200"/></svg>
<div class="t b" style="left:454.500px;top:78.800px;color:#fff">Atom (8)</div>
<div class="row" style="top:108px"></div><div class="pm" style="left:423px;top:120px;width:8px;height:2px"></div><div class="pm" style="left:426px;top:117px;width:2px;height:8px"></div><div class="t" style="left:438.5px;top:116.2px;letter-spacing:-0.1px">Chemistry</div><div class="row" style="top:137px"></div><div class="pm" style="left:423px;top:149px;width:8px;height:2px"></div><div class="pm" style="left:426px;top:146px;width:2px;height:8px"></div><div class="t" style="left:438.5px;top:145.2px;letter-spacing:-0.15px">Coarse graining</div><div class="row" style="top:166px"></div><div class="pm" style="left:423px;top:178px;width:8px;height:2px"></div><div class="pm" style="left:426px;top:175px;width:2px;height:8px"></div><div class="t" style="left:438.5px;top:174.2px;letter-spacing:-0.25px">Display</div><div class="row" style="top:195px"></div><div class="pm" style="left:423px;top:207px;width:8px;height:2px"></div><div class="pm" style="left:426px;top:204px;width:2px;height:8px"></div><div class="t" style="left:438.5px;top:203.2px;letter-spacing:-0.22px">Element</div><div class="row" style="top:224px"></div><div class="pm" style="left:423px;top:236px;width:8px;height:2px"></div><div class="pm" style="left:426px;top:233px;width:2px;height:8px"></div><div class="t" style="left:438.5px;top:232.2px;letter-spacing:0px">Identity</div><div class="row" style="top:253px"></div><div class="pm" style="left:423px;top:265px;width:8px;height:2px"></div><div class="pm" style="left:426px;top:262px;width:2px;height:8px"></div><div class="t" style="left:438.5px;top:261.2px;letter-spacing:0px">Node</div><div class="row" style="top:282px"></div><div class="pm" style="left:423px;top:294px;width:8px;height:2px"></div><div class="pm" style="left:426px;top:291px;width:2px;height:8px"></div><div class="t" style="left:438.5px;top:290.2px;letter-spacing:0px">Other</div><div class="row" style="top:311px"></div><div class="pm" style="left:423px;top:323px;width:8px;height:2px"></div><div class="pm" style="left:426px;top:320px;width:2px;height:8px"></div><div class="t" style="left:438.5px;top:319.2px;letter-spacing:0px">Protein</div><div class="row" style="top:340px"></div><div class="pm" style="left:423px;top:352px;width:8px;height:2px"></div><div class="t" style="left:438.5px;top:348.2px;letter-spacing:-0.1px">Structure</div><div class="lbl" style="top:372.10px;letter-spacing:-0.15px">Covalent radius</div><div class="val" style="left:535px;top:372.10px;letter-spacing:-0.4px">0.31 A</div><div class="lbl" style="top:392.10px">Fixed</div><div class="abs" style="left:537px;top:391px;width:14px;height:14px;background:#fff"></div><div class="lbl" style="top:414.10px;letter-spacing:-0.15px">Geometry</div><div class="abs" style="left:535px;top:409px;width:236px;height:24px;background:#4f7cae"></div><div class="val" style="left:642.5px;top:415.10px">Add</div><div class="lbl" style="top:444.10px">Position</div><div class="abs" style="left:551px;top:434px;width:220px;height:78px;background:#fff"></div><div class="val" style="left:535px;top:441.10px">X</div><div class="val" style="left:557.5px;top:441.10px;color:#000;letter-spacing:-0.6px">3.8348 A</div><div class="spin" style="top:435px"></div><div class="val" style="left:535px;top:467.10px">Y</div><div class="val" style="left:557.5px;top:467.10px;color:#000;letter-spacing:-0.6px">10.6148 A</div><div class="spin" style="top:461px"></div><div class="val" style="left:535px;top:493.10px">Z</div><div class="val" style="left:557.5px;top:493.10px;color:#000;letter-spacing:-0.6px">13.5754 A</div><div class="spin" style="top:487px"></div><div class="abs" style="left:537px;top:515px;width:14px;height:14px;background:#fff"></div><svg class="abs" style="left:537px;top:515px" width="14" height="14" viewBox="537 515 14 14"><path d="M539 522l4.600 4.600 6.600-8.600" fill="none" stroke="#3d72b5" stroke-width="1.500"/></svg><div class="val" style="left:559.5px;top:516.10px;letter-spacing:-0.35px">Relative</div><div class="lbl" style="top:535.10px;letter-spacing:-0.28px">Van der Waals radius</div><div class="val" style="left:535px;top:535.10px;letter-spacing:-0.4px">1.2 A</div><div class="row" style="top:552px"></div><div class="pm" style="left:423px;top:564px;width:8px;height:2px"></div><div class="pm" style="left:426px;top:561px;width:2px;height:8px"></div><div class="t" style="left:438.5px;top:560.2px;letter-spacing:-0.25px">Typization</div><div class="grow" style="top:581px"></div><div class="pm" style="left:407px;top:601px;width:8px;height:2px"></div><svg class="abs" style="left:418px;top:586px" width="34" height="32" viewBox="418 586 34 32">
<defs><linearGradient id="bg2" x1="0" y1="0" x2="0" y2="1"><stop offset="0" stop-color="#4f5563"/><stop offset="0.6" stop-color="#5d6474"/><stop offset="1" stop-color="#6d7688"/></linearGradient></defs>
<circle cx="442.4" cy="596.2" r="6.2" fill="url(#bg2)" stroke="#3a3d47" stroke-width="1"/>
<path d="M428.5 607.9L440.6 597.5" stroke="#14171c" stroke-width="6.6" stroke-linecap="round"/>
<path d="M428.5 607.9L440.6 597.5" stroke="#a8cdf2" stroke-width="4.4" stroke-linecap="round"/>
<circle cx="427.1" cy="609" r="6.2" fill="url(#bg2)" stroke="#3a3d47" stroke-width="1"/>
</svg><div class="t b" style="left:454.5px;top:596.7px;color:#fff;letter-spacing:-0.3px">Bond (6)</div>
<div class="row" style="top:626px;height:8px"></div>
</body></html>
